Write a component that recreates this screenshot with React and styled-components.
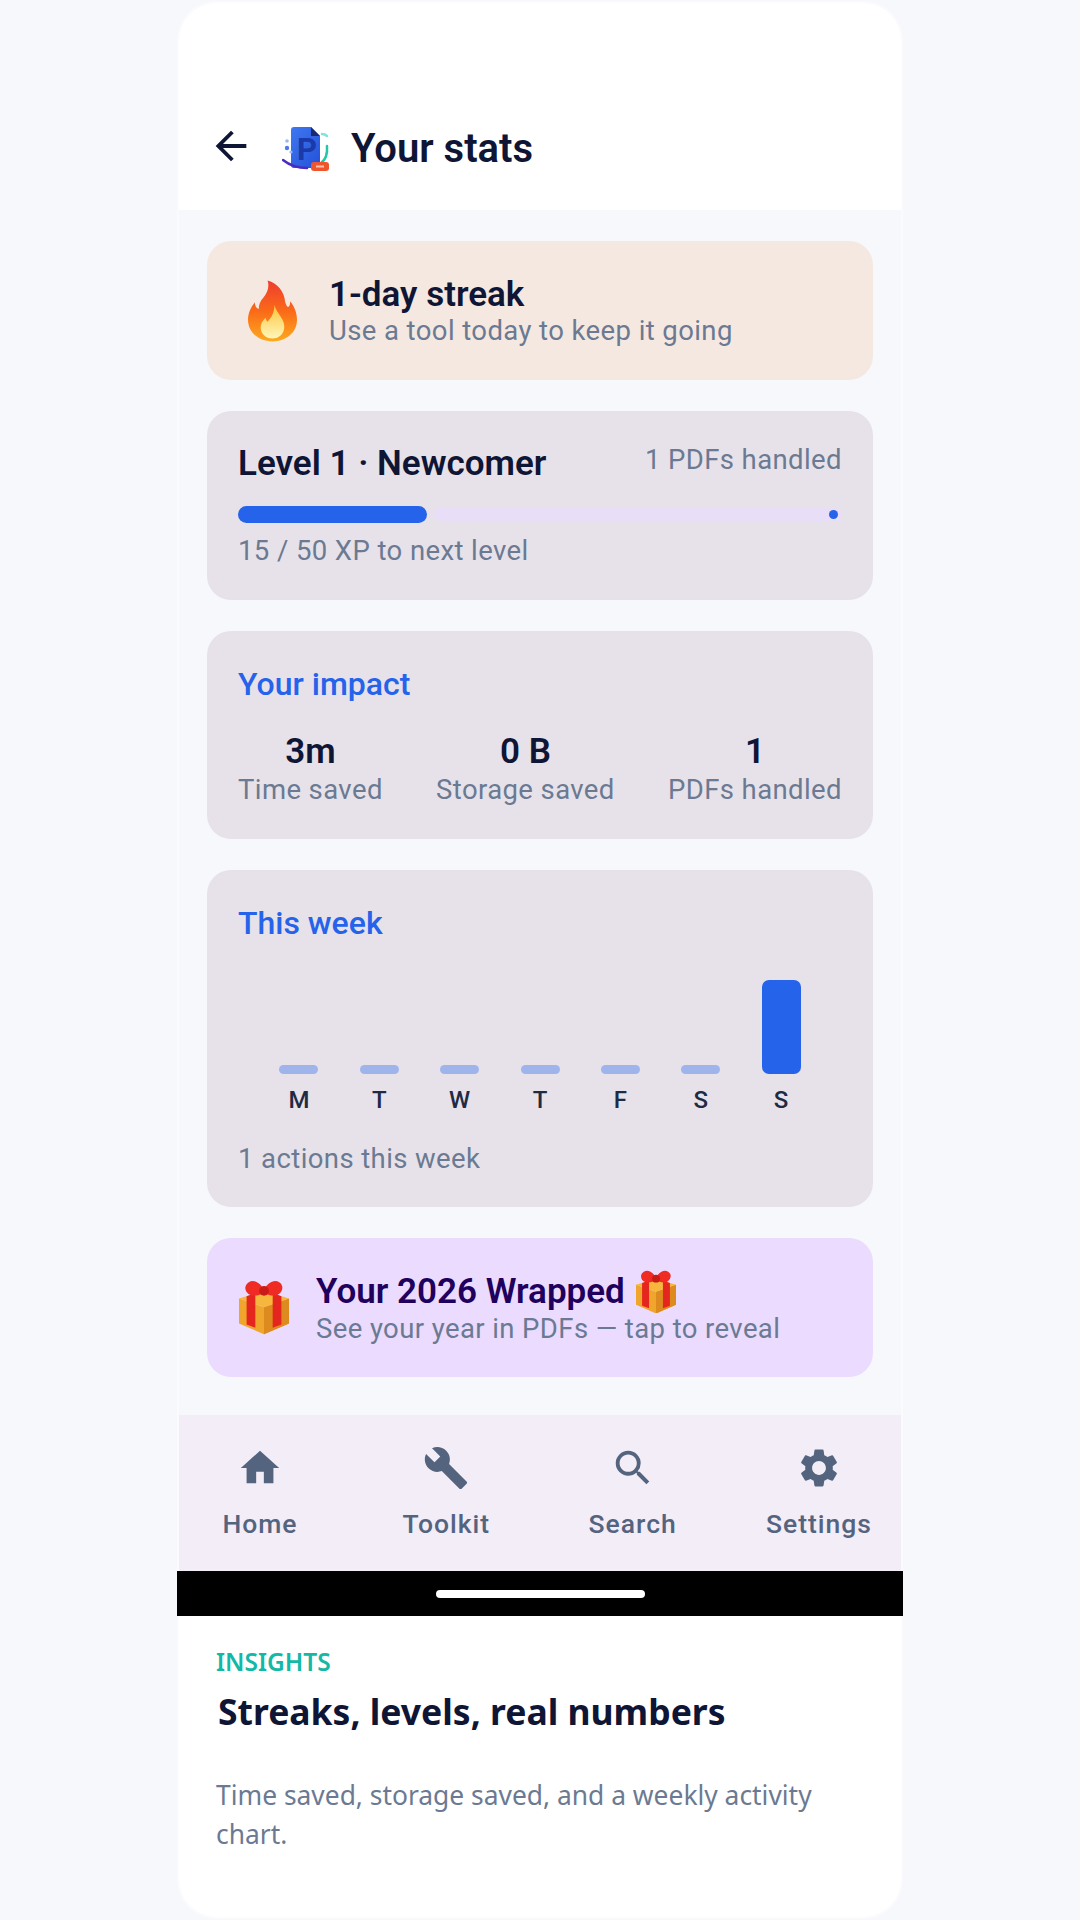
import React from 'react';
import styled, { createGlobalStyle } from 'styled-components';
import { MdArrowBack, MdHome, MdBuild, MdSearch, MdSettings } from 'react-icons/md';

const GlobalStyle = createGlobalStyle`
  html, body {
    margin: 0;
    padding: 0;
    background: #f7f8fc;
  }
  * { box-sizing: border-box; }
`;

const Page = styled.div`
  width: 1080px;
  height: 1920px;
  padding-top: 3px;
  overflow: hidden;
  background: #f7f8fc;
  font-family: Roboto, sans-serif;
`;

const Phone = styled.div`
  width: 722px;
  height: 1914px;
  margin: 0 auto;
  display: flex;
  flex-direction: column;
  background: #fff;
  border-radius: 38px;
  box-shadow: 0 0 0 2px #fbfbfe;
`;

const Header = styled.header`
  height: 207px;
  padding: 120px 0 0 37px;
  display: flex;
  align-items: flex-start;
`;

const BackIcon = styled(MdArrowBack)`
  width: 46px;
  height: 46px;
  margin-left: -8px;
  color: #0f1535;
  flex: none;
`;

const LogoWrap = styled.div`
  width: 48px;
  height: 44px;
  margin: 4px 21px 0 28px;
  flex: none;
`;

const ScreenTitle = styled.h1`
  margin: 1px 0 0;
  font-size: 40px;
  line-height: 50px;
  font-weight: 600;
  color: #0f1535;
`;

const Content = styled.main`
  flex: none;
  height: 1205px;
  padding: 31px 28px 0;
  display: flex;
  flex-direction: column;
  gap: 31px;
  background: #f7f8fc;
`;

const Card = styled.section`
  background: ${(p) => p.$bg || '#e7e2e9'};
  border-radius: 24px;
  padding: ${(p) => p.$pad || '31px'};
  height: ${(p) => p.$h}px;
`;

const BannerCard = styled(Card)`
  display: flex;
  align-items: center;
  gap: ${(p) => p.$gap}px;
`;

const BannerTitle = styled.div`
  margin: 2px 0 -2px;
  font-size: 35px;
  line-height: 40px;
  font-weight: 600;
  color: ${(p) => p.$color || '#0f1535'};
  display: flex;
  align-items: center;
  gap: 11px;
`;

const Muted = styled.div`
  font-size: 27.5px;
  line-height: 36px;
  letter-spacing: 0.4px;
  color: #6b7a92;
`;

const LevelRow = styled.div`
  display: flex;
  justify-content: space-between;
  align-items: flex-start;
`;

const LevelName = styled.div`
  font-size: 35px;
  line-height: 44px;
  font-weight: 600;
  color: #0f1535;
`;

const Progress = styled.div`
  position: relative;
  display: flex;
  align-items: center;
  gap: 7px;
  height: 17px;
  margin: 20px 0 10px;
`;

const ProgressFill = styled.div`
  height: 17px;
  border-radius: 9px;
  background: #2563eb;
`;

const ProgressTrack = styled.div`
  flex: 1;
  height: 15px;
  border-radius: 8px;
  background: #e8def8;
`;

const ProgressDot = styled.span`
  position: absolute;
  right: 4px;
  top: 4px;
  width: 9px;
  height: 9px;
  border-radius: 50%;
  background: #2563eb;
`;

const SectionTitle = styled.h2`
  margin: 0;
  font-size: 32px;
  line-height: 44px;
  font-weight: 500;
  color: #2563eb;
`;

const Stats = styled.div`
  display: flex;
  justify-content: space-between;
  margin-top: 26px;
`;

const Stat = styled.div`
  text-align: center;
`;

const StatValue = styled.div`
  font-size: 35px;
  line-height: 40px;
  font-weight: 600;
  color: #0f1535;
`;

const Chart = styled.div`
  display: flex;
  justify-content: space-evenly;
  align-items: flex-end;
  height: 94px;
  margin-top: 35px;
`;

const Bar = styled.div`
  width: 39px;
  border-radius: 7px;
  background: ${(p) => (p.$active ? '#2563eb' : '#a0b4ec')};
`;

const Days = styled.div`
  display: flex;
  justify-content: space-evenly;
  margin-top: 10px;
`;

const Day = styled.span`
  width: 39px;
  text-align: center;
  font-size: 24px;
  line-height: 32px;
  font-weight: 500;
  color: #1f2a44;
`;

const WeekNote = styled(Muted)`
  margin-top: 25px;
`;

const Nav = styled.nav`
  height: 156px;
  padding: 0 17px 0 16px;
  display: flex;
  justify-content: space-between;
  background: #f3edf7;
  flex: none;
`;

const NavItem = styled.div`
  width: 130px;
  padding-top: 30px;
  display: flex;
  flex-direction: column;
  align-items: center;
  color: #54647f;
  svg {
    width: 46px;
    height: 46px;
  }
`;

const NavLabel = styled.span`
  margin-top: 15px;
  font-size: 26.5px;
  line-height: 36px;
  font-weight: 500;
  letter-spacing: 1px;
`;

const GestureBar = styled.div`
  height: 45px;
  margin: 0 -2px;
  display: flex;
  align-items: center;
  justify-content: center;
  background: #000;
  flex: none;
`;

const GesturePill = styled.span`
  width: 209px;
  height: 8px;
  border-radius: 4px;
  background: #fff;
`;

const Caption = styled.footer`
  padding: 30px 37px 0;
  font-family: 'Noto Sans', 'Open Sans', sans-serif;
`;

const Eyebrow = styled.div`
  font-size: 24.5px;
  line-height: 32px;
  font-weight: 600;
  color: #14b8a6;
`;

const CaptionTitle = styled.h3`
  margin: 9px 0 0 2px;
  font-size: 35.5px;
  line-height: 48px;
  font-weight: 700;
  color: #0f1535;
`;

const CaptionText = styled.p`
  margin: 41px 0 0;
  font-size: 26.4px;
  line-height: 39px;
  color: #6b7a92;
`;

function Logo() {
  return (
    <svg viewBox="0 0 48 44" width="48" height="44">
      <defs>
        <linearGradient id="docFill" x1="0" y1="0" x2="1" y2="1">
          <stop offset="0" stopColor="#3f78f2" />
          <stop offset="1" stopColor="#2350d8" />
        </linearGradient>
      </defs>
      <path d="M9 3q0-3 3-3h17l9 9v29q0 3-3 3H12q-3 0-3-3z" fill="url(#docFill)" />
      <path d="M29 0l9 9h-9z" fill="#1a2a6c" />
      <text x="15" y="33" fontFamily="Roboto, sans-serif" fontSize="31" fontWeight="700" fill="#1b39a8">P</text>
      <circle cx="5" cy="14" r="1.8" fill="#9db8f2" />
      <circle cx="5" cy="21" r="2.2" fill="#4f7be8" />
      <circle cx="9" cy="25" r="1.6" fill="#9db8f2" />
      <path d="M1 33q10 8 24 8" fill="none" stroke="#4a2bc2" strokeWidth="2.5" strokeLinecap="round" />
      <path d="M45 19q1 12-6 17" fill="none" stroke="#22c7a9" strokeWidth="2.5" strokeLinecap="round" />
      <path d="M40 7q3 0 5 2" fill="none" stroke="#7fe3e0" strokeWidth="2.5" strokeLinecap="round" />
      <rect x="29" y="35" width="18" height="9" rx="3" fill="#f0562e" />
      <rect x="34" y="38.5" width="8" height="2" fill="#ffc4ad" />
    </svg>
  );
}

function Flame() {
  return (
    <svg viewBox="0 0 50 62" width="49" height="62">
      <defs>
        <linearGradient id="flameOuter" x1="0" y1="0" x2="0" y2="1">
          <stop offset="0" stopColor="#ee3d2e" />
          <stop offset="0.5" stopColor="#fa6a18" />
          <stop offset="1" stopColor="#fda91f" />
        </linearGradient>
        <linearGradient id="flameInner" x1="0" y1="0" x2="0" y2="1">
          <stop offset="0" stopColor="#fdc43c" />
          <stop offset="1" stopColor="#fff6b8" />
        </linearGradient>
      </defs>
      <path
        d="M20 0c10 3 17 11 18 22 1 3 2 5 3 5 2-1 2-4 2-6 5 6 7 13 7 19 0 13-11 22-25 22S0 53 0 40c0-7 3-13 7-18 0 3 1 6 4 7 0-4 1-8 5-12 4-5 6-11 4-17z"
        fill="url(#flameOuter)"
      />
      <path
        d="M27 25c1 5 4 8 7 13 2 3 3 6 3 9 0 7-5 12-12 12s-12-5-12-11c0-5 3-8 5-10 0 2 1 3 2 4 4-4 7-10 7-17z"
        fill="url(#flameInner)"
      />
    </svg>
  );
}

function Gift({ size }) {
  return (
    <svg viewBox="0 0 46 50" width={size} height={size * 50 / 46}>
      <path d="M0 17l23 8 23-8v23L23 50 0 40z" fill="#f0a52c" />
      <path d="M23 25l23-8v23L23 50z" fill="#dd8a1e" />
      <path d="M0 17l23-7 23 7-23 8z" fill="#f7b63c" />
      <path d="M7 15l8-3v32l-8-3zM31 12l8 3v26l-8 3z" fill="#e5261f" />
      <path d="M9 2c5-3 11 1 14 7 3-6 9-10 14-7 5 3 3 10-2 12-4 1-9 0-12-3-3 3-8 4-12 3C5 12 4 5 9 2z" fill="#ef2b24" />
      <circle cx="23" cy="10" r="4.5" fill="#c91c17" />
    </svg>
  );
}

const bars = [
  { day: 'M', h: 9 },
  { day: 'T', h: 9 },
  { day: 'W', h: 9 },
  { day: 'T', h: 9 },
  { day: 'F', h: 9 },
  { day: 'S', h: 9 },
  { day: 'S', h: 94, active: true },
];

const stats = [
  { value: '3m', label: 'Time saved' },
  { value: '0 B', label: 'Storage saved' },
  { value: '1', label: 'PDFs handled' },
];

const tabs = [
  { label: 'Home', Icon: MdHome },
  { label: 'Toolkit', Icon: MdBuild },
  { label: 'Search', Icon: MdSearch },
  { label: 'Settings', Icon: MdSettings },
];

export default function App() {
  return (
    <Page>
      <GlobalStyle />
      <Phone>
        <Header>
          <BackIcon />
          <LogoWrap>
            <Logo />
          </LogoWrap>
          <ScreenTitle>Your stats</ScreenTitle>
        </Header>
        <Content>
          <BannerCard $bg="#f5e8e1" $h={139} $pad="0 0 0 41px" $gap={32}>
            <Flame />
            <div>
              <BannerTitle>1-day streak</BannerTitle>
              <Muted>Use a tool today to keep it going</Muted>
            </div>
          </BannerCard>
          <Card $h={189}>
            <LevelRow>
              <LevelName>Level 1 · Newcomer</LevelName>
              <Muted>1 PDFs handled</Muted>
            </LevelRow>
            <Progress>
              <ProgressFill style={{ width: `${(15 / 50) * 100 + 1.3}%` }} />
              <ProgressTrack />
              <ProgressDot />
            </Progress>
            <Muted>15 / 50 XP to next level</Muted>
          </Card>
          <Card $h={208}>
            <SectionTitle>Your impact</SectionTitle>
            <Stats>
              {stats.map((s) => (
                <Stat key={s.label}>
                  <StatValue>{s.value}</StatValue>
                  <Muted>{s.label}</Muted>
                </Stat>
              ))}
            </Stats>
          </Card>
          <Card $h={337}>
            <SectionTitle>This week</SectionTitle>
            <Chart>
              {bars.map((b, i) => (
                <Bar key={i} $active={b.active} style={{ height: b.h }} />
              ))}
            </Chart>
            <Days>
              {bars.map((b, i) => (
                <Day key={i}>{b.day}</Day>
              ))}
            </Days>
            <WeekNote>1 actions this week</WeekNote>
          </Card>
          <BannerCard $bg="#eadbff" $h={139} $pad="0 0 0 32px" $gap={27}>
            <Gift size={50} />
            <div>
              <BannerTitle $color="#21005d">
                Your 2026 Wrapped <Gift size={40} />
              </BannerTitle>
              <Muted>See your year in PDFs — tap to reveal</Muted>
            </div>
          </BannerCard>
        </Content>
        <Nav>
          {tabs.map(({ label, Icon }) => (
            <NavItem key={label}>
              <Icon />
              <NavLabel>{label}</NavLabel>
            </NavItem>
          ))}
        </Nav>
        <GestureBar>
          <GesturePill />
        </GestureBar>
        <Caption>
          <Eyebrow>INSIGHTS</Eyebrow>
          <CaptionTitle>Streaks, levels, real numbers</CaptionTitle>
          <CaptionText>Time saved, storage saved, and a weekly activity chart.</CaptionText>
        </Caption>
      </Phone>
    </Page>
  );
}
